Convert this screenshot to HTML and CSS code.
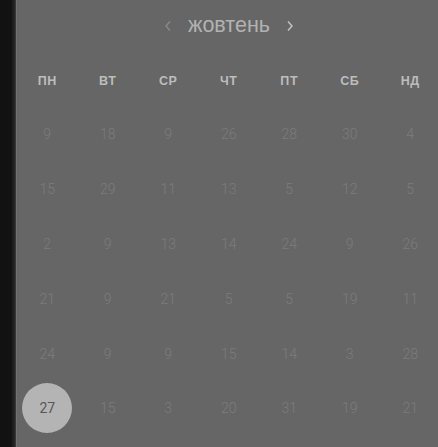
FILE: index.html
```html
<!DOCTYPE html>
<html lang="uk">
<head>
<meta charset="utf-8">
<title>Календар</title>
<link rel="stylesheet" href="styles.css">
</head>
<body>
<div class="strip"></div>
<main class="panel">
  <header class="month-bar">
    <button class="nav prev" aria-label="Попередній">
      <svg width="8" height="12" viewBox="0 0 8 12"><path d="M6 1.5 L2 6 L6 10.5" fill="none" stroke="currentColor" stroke-width="1.4"/></svg>
    </button>
    <span class="month">жовтень</span>
    <button class="nav next" aria-label="Наступний">
      <svg width="8" height="12" viewBox="0 0 8 12"><path d="M2 1.5 L6 6 L2 10.5" fill="none" stroke="currentColor" stroke-width="1.4"/></svg>
    </button>
  </header>
  <div class="weekdays">
    <span>ПН</span><span>ВТ</span><span>СР</span><span>ЧТ</span><span>ПТ</span><span>СБ</span><span>НД</span>
  </div>
  <div class="days">
    <span>9</span><span>18</span><span>9</span><span>26</span><span>28</span><span>30</span><span>4</span>
    <span>15</span><span>29</span><span>11</span><span>13</span><span>5</span><span>12</span><span>5</span>
    <span>2</span><span>9</span><span>13</span><span>14</span><span>24</span><span>9</span><span>26</span>
    <span>21</span><span>9</span><span>21</span><span>5</span><span>5</span><span>19</span><span>11</span>
    <span>24</span><span>9</span><span>9</span><span>15</span><span>14</span><span>3</span><span>28</span>
    <span class="selected"><b>27</b></span><span>15</span><span>3</span><span>20</span><span>31</span><span>19</span><span>21</span>
  </div>
</main>
</body>
</html>
```
FILE: styles.css
```css
html, body {
  margin: 0;
  padding: 0;
  height: 100%;
  overflow: hidden;
}
body {
  background: #111111;
  display: flex;
  font-family: Roboto, "Liberation Sans", sans-serif;
}
.strip {
  width: 16px;
  flex: none;
  background: linear-gradient(to right, #121212 0, #121212 11px, #2a2a2a 15px, #444 16px);
}
.panel {
  flex: 1;
  background: #666666;
  box-shadow: inset 1px 0 0 #727272;
  padding-left: 1px;
  padding-top: 1px;
  overflow: hidden;
}
.month-bar {
  height: 50px;
  box-sizing: border-box;
  padding-top: 2px;
  display: flex;
  align-items: center;
  justify-content: center;
  gap: 16px;
  padding-left: 3px;
}
.month {
  font-family: "Liberation Sans", Arial, sans-serif;
  font-size: 21.5px;
  color: #b2b2b2;
  font-weight: 400;
  line-height: 1;
  padding-bottom: 2px;
}
.nav {
  background: none;
  border: 0;
  padding: 0;
  display: flex;
  align-items: center;
  margin-top: -3px;
}
.nav.prev { color: #8a8a8a; }
.nav.next { color: #c4c4c4; }
.weekdays {
  height: 56px;
  padding-top: 4px;
  box-sizing: border-box;
  display: grid;
  grid-template-columns: repeat(7, 60.5px);
  align-items: center;
}
.weekdays span {
  text-align: center;
  font-family: "Liberation Sans", Arial, sans-serif;
  font-size: 12.5px;
  font-weight: 700;
  color: #bdbdbd;
  letter-spacing: 0.6px;
}
.days {
  display: grid;
  grid-template-columns: repeat(7, 60.5px);
  grid-auto-rows: 54.8px;
}
.days span {
  display: flex;
  align-items: center;
  justify-content: center;
  font-size: 14px;
  font-weight: 300;
  color: #7c7c7c;
}
.days .selected b {
  width: 50px;
  height: 50px;
  border-radius: 50%;
  background: #b4b4b4;
  color: #575757;
  font-weight: 400;
  display: flex;
  align-items: center;
  justify-content: center;
}
```
